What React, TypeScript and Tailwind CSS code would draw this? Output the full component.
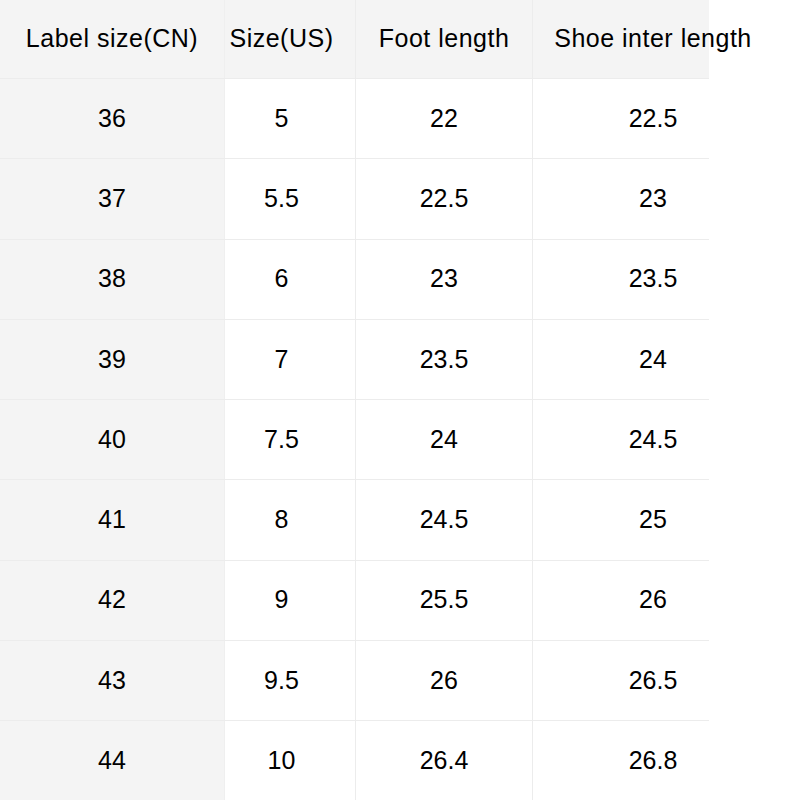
const rows = [
  ["36", "5", "22", "22.5"],
  ["37", "5.5", "22.5", "23"],
  ["38", "6", "23", "23.5"],
  ["39", "7", "23.5", "24"],
  ["40", "7.5", "24", "24.5"],
  ["41", "8", "24.5", "25"],
  ["42", "9", "25.5", "26"],
  ["43", "9.5", "26", "26.5"],
  ["44", "10", "26.4", "26.8"],
];

function Row({ cells, head }: { cells: string[]; head?: boolean }) {
  return (
    <div
      className={`flex w-[709px] ${head ? "h-[78px] bg-[#f4f4f4]" : "h-[80.25px] border-t border-[#ececec]"}`}
    >
      <div className="flex w-[225px] items-center justify-center bg-[#f4f4f4] border-r border-[#efefef]">
        {cells[0]}
      </div>
      <div className="flex w-[131px] items-center justify-center pr-[17px] border-r border-[#ececec]">
        {cells[1]}
      </div>
      <div className="flex w-[177px] items-center justify-center border-r border-[#ececec]">
        {cells[2]}
      </div>
      <div className="flex w-[176px] items-center">
        <div className="w-[240px] shrink-0 text-center whitespace-nowrap">{cells[3]}</div>
      </div>
    </div>
  );
}

export default function App() {
  return (
    <div
      className="h-[800px] w-[800px] overflow-hidden bg-white text-[25px] text-black"
      style={{ fontFamily: '"Liberation Sans", Arial, sans-serif' }}
    >
      <div className="tracking-[0.5px]">
        <Row head cells={["Label size(CN)", "Size(US)", "Foot length", "Shoe inter length"]} />
      </div>
      {rows.map((r) => (
        <Row key={r[0]} cells={r} />
      ))}
    </div>
  );
}
